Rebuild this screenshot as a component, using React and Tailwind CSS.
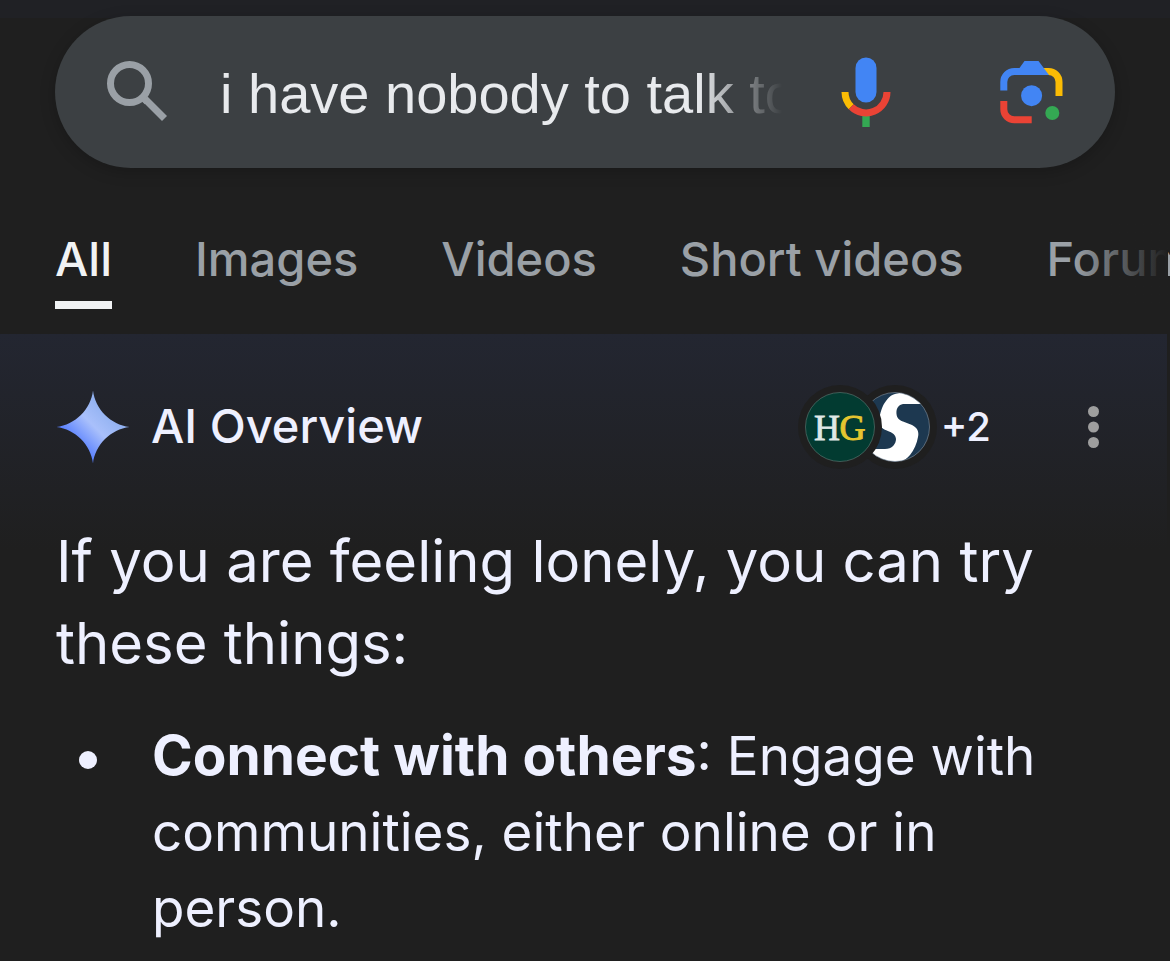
const TABS = ['All', 'Images', 'Videos', 'Short videos', 'Forums']

function SearchIcon() {
  return (
    <svg className="w-16 h-16 shrink-0" viewBox="0 0 64 64" fill="none" stroke="#9aa0a6" strokeWidth="7">
      <circle cx="26.500" cy="23.500" r="19" />
      <path d="M42 39 L61.5 58.5" />
      <path d="M38.5 37.5 L43.5 42.5" strokeWidth="5" />
    </svg>
  )
}

function MicIcon() {
  return (
    <svg className="w-[72px] h-[72px]" viewBox="0 0 72 72" fill="none">
      <rect x="25.5" y="1.5" width="21" height="45" rx="10.5" fill="#4285f4" />
      <path d="M32.3 59 h7.4 v12 h-7.4 z" fill="#34a853" />
      <path d="M15 36 A21 21 0 0 0 21.2 50.8" stroke="#fbbc04" strokeWidth="7" />
      <path d="M21.2 50.8 A21 21 0 0 0 57 36" stroke="#ea4335" strokeWidth="7" />
    </svg>
  )
}

function LensIcon() {
  return (
    <svg className="w-[72px] h-[72px]" viewBox="0 0 72 72" fill="none">
      <path d="M46 15.5 H52.5 A10.5 10.5 0 0 1 63 26 V40" stroke="#fbbc04" strokeWidth="7" />
      <path d="M7.8 34.5 V26 A10.5 10.5 0 0 1 18.3 15.5 H30" stroke="#4285f4" strokeWidth="7" />
      <path d="M23.5 12 L28.5 5 H42.5 L53 19 H23.5 Z" fill="#4285f4" />
      <path d="M7.8 45 V53.3 A10.5 10.5 0 0 0 18.3 63.8 H35.7" stroke="#ea4335" strokeWidth="7" />
      <circle cx="35.6" cy="39.7" r="10.5" fill="#4285f4" />
      <circle cx="56.3" cy="57" r="7" fill="#34a853" />
    </svg>
  )
}

function SparkIcon() {
  return (
    <svg className="w-[76px] h-[76px] shrink-0" viewBox="0 0 76 76">
      <defs>
        <linearGradient id="spark" x1="18" y1="56" x2="54" y2="20" gradientUnits="userSpaceOnUse">
          <stop offset="0" stopColor="#4f78ff" />
          <stop offset="0.55" stopColor="#a9c0fb" />
          <stop offset="1" stopColor="#8fb0f0" />
        </linearGradient>
      </defs>
      <path
        d="M38 1.5 C40 20 56 36 74.5 38 C56 40 40 56 38 74.5 C36 56 20 40 1.5 38 C20 36 36 20 38 1.5 Z"
        fill="url(#spark)"
      />
    </svg>
  )
}

function Sources() {
  return (
    <button type="button" aria-label="Sources" className="flex items-center">
      <span className="relative z-10 rounded-full bg-[#1f1f1f] p-[7px]">
        <svg className="w-[70px] h-[70px]" viewBox="0 0 70 70">
          <circle cx="35" cy="35" r="34.5" fill="#023b31" stroke="#5f7f79" strokeWidth="0.6" />
          <text x="9" y="47.5" fontSize="36" fontFamily="Liberation Serif, serif" fill="#dfe8e6" stroke="#dfe8e6" strokeWidth="0.8">H</text>
          <text x="34.5" y="47.5" fontSize="36" fontFamily="Liberation Serif, serif" fill="#e5c52f" stroke="#e5c52f" strokeWidth="1">G</text>
        </svg>
      </span>
      <span className="-ml-[29px] rounded-full bg-[#1f1f1f] p-[7px]">
        <svg className="w-[70px] h-[70px]" viewBox="0 0 70 70">
          <defs>
            <clipPath id="disc">
              <circle cx="35" cy="35" r="34.5" />
            </clipPath>
          </defs>
          <g clipPath="url(#disc)">
            <rect width="70" height="70" fill="#1d3850" />
            <path
              d="M72 12 H43 C38 13 36 17 36.500 22 C37 26 39 28 43 29.500 L52 33 C58 36 59 40 58 45 C57 51 54 58 50 63 C45 69 39 71 31 71 H4 V57 H25 C32 57 36 52 36 47 C35.500 43 33 41 29 39.500 C23 37 19 35 19 29 C20 21 22 14 26 9 C30 3 35 1 42 1 H72 Z"
              fill="#fff"
            />
          </g>
          <circle cx="35" cy="35" r="34.5" fill="none" stroke="#8494a2" strokeWidth="0.6" />
        </svg>
      </span>
      <span className="ml-1 text-[40px] leading-none font-medium">+2</span>
    </button>
  )
}

function SearchBar() {
  return (
    <form
      role="search"
      onSubmit={e => e.preventDefault()}
      className="mx-[55px] flex h-[152px] items-center rounded-full bg-[#3c4043] pl-12 pr-[47px] shadow-[0_4px_16px_rgba(0,0,0,0.2)]"
    >
      <SearchIcon />
      <input
        type="text"
        aria-label="Search"
        defaultValue="i have nobody to talk to"
        className="ml-[53px] h-20 min-w-0 flex-1 bg-transparent pt-1 font-['Liberation_Sans',sans-serif] text-[56px] text-[#e8eaed] outline-none [mask-image:linear-gradient(to_right,#000_calc(100%-84px),transparent)]"
      />
      <button type="button" aria-label="Search by voice" className="ml-12">
        <MicIcon />
      </button>
      <button type="button" aria-label="Search by image" className="ml-[94px]">
        <LensIcon />
      </button>
    </form>
  )
}

function Tabs() {
  return (
    <nav className="relative mt-14 flex gap-[83px] overflow-hidden whitespace-nowrap pl-[55px] text-[47px] leading-[70px] font-medium">
      {TABS.map((tab, i) => (
        <a
          key={tab}
          href="#"
          className={i === 0 ? 'border-b-8 border-[#f1f3f4] pb-[7px] text-[#f1f3f4]' : 'pb-[15px] text-[#9aa0a6]'}
        >
          {tab}
        </a>
      ))}
      <div className="absolute inset-y-0 right-[2px] w-24 bg-linear-to-r from-transparent to-[#1f1f1f]" />
    </nav>
  )
}

function Overview() {
  return (
    <main className="mr-[3px] mt-[25px] bg-[linear-gradient(#232631,#1f1f1f_216px)] px-14 pt-[51px] text-[#eef0ff]">
      <header className="-ml-px flex items-center">
        <SparkIcon />
        <h1 className="ml-5 flex-1 pb-1 text-[47px] leading-none font-medium">AI Overview</h1>
        <Sources />
        <button type="button" aria-label="More options" className="ml-[88px]">
          <svg className="w-8 h-12" viewBox="0 0 32 48" fill="#9e9e9e">
            <circle cx="14.5" cy="8.5" r="5.5" />
            <circle cx="14.5" cy="24" r="5.5" />
            <circle cx="14.5" cy="39.5" r="5.5" />
          </svg>
        </button>
      </header>
      <p className="mt-[51px] text-[58px] leading-[82px]">If you are feeling lonely, you can try these things:</p>
      <ul className="mt-[33px]">
        <li className="flex text-[53px] leading-[76px]">
          <span className="ml-[23px] mr-[55px] mt-[34px] h-[18px] w-[18px] shrink-0 rounded-full bg-[#eef0ff]" />
          <p>
            <strong className="text-[55px]">Connect with others</strong>: Engage with communities, either online or in person.
          </p>
        </li>
      </ul>
    </main>
  )
}

export default function App() {
  return (
    <div className="min-h-screen overflow-hidden bg-[linear-gradient(#202125_18px,#1f1f1f_18px)] pt-4 font-[Inter,sans-serif]">
      <SearchBar />
      <Tabs />
      <Overview />
    </div>
  )
}
